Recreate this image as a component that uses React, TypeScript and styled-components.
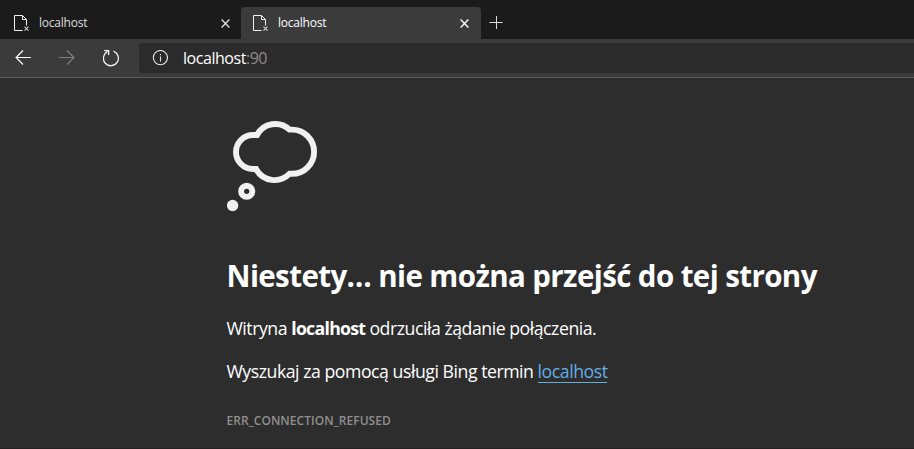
import React from 'react';
import styled, { createGlobalStyle } from 'styled-components';

const GlobalStyle = createGlobalStyle`
  * { box-sizing: border-box; }
  body {
    margin: 0;
    background: #2d2d2d;
    color: #fff;
    font-family: 'Open Sans', 'Noto Sans', sans-serif;
    overflow: hidden;
  }
  svg { display: block; flex: none; }
`;

const Browser = styled.div`
  display: flex;
  flex-direction: column;
  height: 449px;
  overflow: hidden;
  border-bottom: 1px solid #272023;
`;

const TabStrip = styled.header`
  display: flex;
  height: 39px;
  padding-top: 7px;
  background: linear-gradient(#1b1b1b 34px, #171717 39px);
`;

const Tab = styled.div<{ $active?: boolean }>`
  display: flex;
  align-items: center;
  width: ${p => (p.$active ? 240 : 241)}px;
  height: 32px;
  padding: ${p => (p.$active ? '0 12px 0 11px' : '0 11px 0 13px')};
  border-radius: 4px 4px 0 0;
  background: ${p => (p.$active ? '#3b3b3b' : 'transparent')};
  color: ${p => (p.$active ? '#fff' : '#dedede')};
`;

const TabTitle = styled.span`
  flex: 1;
  margin-left: 9px;
  font-size: 12px;
  line-height: 16px;
  letter-spacing: -0.22px;
`;

const NewTab = styled.div`
  display: flex;
  align-items: center;
  height: 32px;
  padding-left: 8px;
`;

const Toolbar = styled.nav`
  display: flex;
  height: 39px;
  padding: 4px 0 4px 15px;
  background: #3b3b3b;
  border-bottom: 1px solid #5c5c5c;
`;

const NavButtons = styled.div`
  display: flex;
  gap: 28px;
  width: 124px;
  padding-top: 7px;
`;

const AddressBar = styled.div`
  display: flex;
  align-items: center;
  flex: 1;
  height: 30px;
  padding-left: 13px;
  border-radius: 4px 0 0 4px;
  background: #2b2b2b;
`;

const Address = styled.span`
  margin-left: 15px;
  font-size: 16px;
  line-height: 22px;
  letter-spacing: -0.46px;
`;

const Port = styled.span`
  color: #8c8c8c;
`;

const ErrorPage = styled.main`
  display: flex;
  flex-direction: column;
  align-items: flex-start;
  flex: 1;
  padding: 42px 0 0 226.5px;
  white-space: nowrap;
`;

const Heading = styled.h1`
  margin: 44px 0 0;
  font-size: 29.5px;
  line-height: 40px;
  font-weight: 700;
  letter-spacing: -0.6px;
`;

const Message = styled.p<{ $gap: number }>`
  margin: ${p => p.$gap}px 0 0;
  font-size: 17.7px;
  line-height: 24px;
  letter-spacing: -0.47px;
`;

const Host = styled.strong`
  font-weight: 700;
  letter-spacing: -0.72px;
`;

const SearchLink = styled.a`
  display: inline-block;
  height: 24px;
  border-bottom: 1px solid #63ade5;
  color: #63ade5;
  text-decoration: none;
`;

const ErrorCode = styled.p`
  margin: 30px 0 0;
  color: #8f8f8f;
  font-size: 12px;
  line-height: 16px;
  font-weight: 600;
  letter-spacing: 0.04px;
`;

const MissingPageIcon = () => (
  <svg width="17" height="18" viewBox="0 0 17 18" fill="none" stroke="#f0f0f0">
    <path d="M9.5 16.5h-8v-15h8l4 4v6M9.5 1.5v4h4" />
    <path d="M11.5 12.6l4 4m0-4l-4 4" stroke="#d0d0d0" strokeWidth="1.1" />
  </svg>
);

const CloseIcon = () => (
  <svg width="9" height="9" viewBox="0 0 9 9" stroke="currentColor" strokeWidth="1.35">
    <path d="M.6.6l7.8 7.8M8.4.6L.6 8.4" />
  </svg>
);

const PlusIcon = () => (
  <svg width="14" height="14" viewBox="0 0 14 14" stroke="#dcdcdc">
    <path d="M.5 6.5h13M7.5 0v13" />
  </svg>
);

const BackIcon = () => (
  <svg width="16" height="16" viewBox="0 0 16 16" fill="none" stroke="#fff" strokeWidth="1.15">
    <path d="M16 7.5H1M8 .5l-7 7 7 7" />
  </svg>
);

const ForwardIcon = () => (
  <svg width="16" height="16" viewBox="0 0 16 16" fill="none" stroke="#808080" strokeWidth="1.15">
    <path d="M0 7.5h15M8 .5l7 7-7 7" />
  </svg>
);

const ReloadIcon = () => (
  <svg width="17" height="17" viewBox="0.8 0.2 17 17" fill="none" stroke="#f2f2f2" strokeWidth="1.3">
    <path d="M11.3 1.4A7.5 7.5 0 1 1 5.2 1.8M2 .8h4.4v4.3" />
  </svg>
);

const InfoIcon = () => (
  <svg width="16" height="16" viewBox="0 0 16 16" fill="none" stroke="#e8e8e8" strokeWidth="1.1">
    <circle cx="8.4" cy="7.6" r="7.1" />
    <path d="M8.5 6.5v5M8.5 4v1.2" />
  </svg>
);

const ThoughtIcon = () => (
  <svg width="92" height="92" viewBox="227 120 92 92" fill="none" stroke="#f0f0f0" strokeWidth="5.9">
    <path d="M257 135H253a17 17 0 0 0 0 34h3a21 21 0 0 0 33.5 4.8h2.5a22 22 0 0 0 0-44.2h-2.5a20.7 20.7 0 0 0-32.5 5.4z" />
    <circle cx="246.7" cy="191.3" r="5.6" />
    <circle cx="232.6" cy="205.5" r="5.7" fill="#f0f0f0" stroke="none" />
  </svg>
);

export default function App() {
  return (
    <Browser>
      <GlobalStyle />
      <TabStrip>
        <Tab>
          <MissingPageIcon />
          <TabTitle>localhost</TabTitle>
          <CloseIcon />
        </Tab>
        <Tab $active>
          <MissingPageIcon />
          <TabTitle>localhost</TabTitle>
          <CloseIcon />
        </Tab>
        <NewTab>
          <PlusIcon />
        </NewTab>
      </TabStrip>
      <Toolbar>
        <NavButtons>
          <BackIcon />
          <ForwardIcon />
          <ReloadIcon />
        </NavButtons>
        <AddressBar>
          <InfoIcon />
          <Address>
            localhost<Port>:90</Port>
          </Address>
        </AddressBar>
      </Toolbar>
      <ErrorPage>
        <ThoughtIcon />
        <Heading>Niestety… nie można przejść do tej strony</Heading>
        <Message $gap={20}>
          Witryna <Host>localhost</Host> odrzuciła żądanie połączenia.
        </Message>
        <Message $gap={19}>
          Wyszukaj za pomocą usługi Bing termin <SearchLink href="#">localhost</SearchLink>
        </Message>
        <ErrorCode>ERR_CONNECTION_REFUSED</ErrorCode>
      </ErrorPage>
    </Browser>
  );
}
